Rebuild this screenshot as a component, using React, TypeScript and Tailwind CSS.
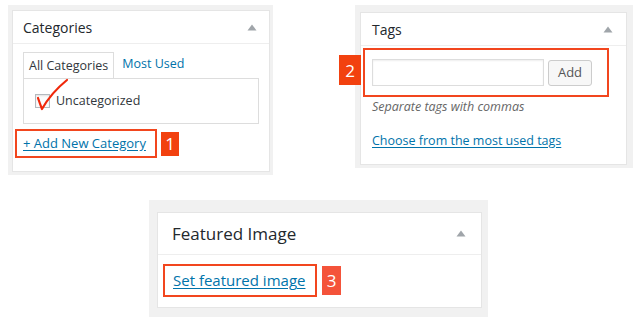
const font = { fontFamily: '"Open Sans", "Noto Sans", sans-serif' }

function Caret() {
  return (
    <svg width="10" height="7" viewBox="0 0 10 7" className="shrink-0">
      <path d="M5 0.5 L9.5 6.5 L0.5 6.5 Z" fill="#a0a5aa" />
    </svg>
  )
}

function Badge({ n, className }: { n: string; className: string }) {
  return (
    <div
      className={
        'flex items-center justify-center text-white text-[17px] leading-none ' + className
      }
    >
      {n}
    </div>
  )
}

function CategoriesBox() {
  return (
    <div className="ml-[8px] w-[265px] h-[170px] bg-[#f1f1f1] pl-[4px] pr-[3px] pt-[5px] pb-[3px]">
      <div className="h-full bg-white border border-[#e5e5e5] flex flex-col">
        <div className="h-[33px] flex items-center justify-between pl-[10px] pr-[12px] border-b border-[#eeeeee]">
          <span className="text-[14px] text-[#23282d]">Categories</span>
          <Caret />
        </div>
        <div className="pl-[10px] pr-[10px] pt-[7px]">
          <div className="flex items-end">
            <div className="h-[27px] px-[5px] flex items-center border border-b-0 border-[#dddddd] bg-white relative top-[1px] text-[12.5px] text-[#32373c]">
              All Categories
            </div>
            <div className="h-[27px] px-[8px] flex items-center text-[12.5px] text-[#0073aa]">
              Most Used
            </div>
          </div>
          <div className="h-[46px] border border-[#dddddd] flex items-center pl-[11px] relative">
            <div className="w-[15px] h-[14px] border border-[#b4b9be] bg-[#fbfbfb] shadow-[inset_0_1px_2px_rgba(0,0,0,0.1)]" />
            <span className="ml-[6px] text-[12.5px] text-[#32373c]">Uncategorized</span>
            <svg
              width="40"
              height="48"
              viewBox="0 0 40 48"
              className="absolute left-[10px] top-[-12px]"
            >
              <path
                d="M4 31 Q6 37 8 42 Q17 26 33 13"
                fill="none"
                stroke="#f0280a"
                strokeWidth="2.2"
                strokeLinecap="round"
                strokeLinejoin="round"
              />
            </svg>
          </div>
        </div>
        <div className="flex items-center mt-[5px] pl-[2px]">
          <div className="w-[142px] h-[29px] border-2 border-[#f2461e] flex items-center pl-[6px]">
            <a className="text-[13px] text-[#0073aa] underline underline-offset-2">
              + Add New Category
            </a>
          </div>
          <Badge n="1" className="ml-[4px] w-[18px] h-[24px] bg-[#f2410f]" />
        </div>
      </div>
    </div>
  )
}

function TagsBox() {
  return (
    <div className="ml-[82px] w-[278px] h-[163px] bg-[#f1f1f1] pl-[5px] pr-[6px] pt-[7px] pb-[3px]">
      <div className="h-full bg-white border border-[#e5e5e5] flex flex-col">
        <div className="h-[33px] flex items-center justify-between pl-[11px] pr-[13px] border-b border-[#eeeeee]">
          <span className="text-[14px] text-[#23282d]">Tags</span>
          <Caret />
        </div>
        <div className="flex items-start mt-[2px] -ml-[22px]">
          <Badge n="2" className="mt-[7px] w-[22px] h-[30px] bg-[#f2410f]" />
          <div className="ml-[2px] w-[246px] h-[49px] border-2 border-[#f2461e] flex items-center pl-[7px] gap-[4px]">
            <div className="w-[172px] h-[27px] border border-[#dddddd] bg-white shadow-[inset_0_1px_2px_rgba(0,0,0,0.07)]" />
            <div className="w-[44px] h-[26px] border border-[#cccccc] bg-[#f7f7f7] rounded-[3px] flex items-center justify-center text-[13px] text-[#555555]">
              Add
            </div>
          </div>
        </div>
        <div className="pl-[11px] mt-[1px] text-[12.5px] italic text-[#666666]">
          Separate tags with commas
        </div>
        <div className="pl-[11px] mt-[10px]">
          <a className="text-[12.5px] text-[#0073aa] underline underline-offset-2">
            Choose from the most used tags
          </a>
        </div>
      </div>
    </div>
  )
}

function FeaturedBox() {
  return (
    <div className="ml-[149px] w-[339px] h-[117px] bg-[#f1f1f1] pl-[8px] pr-[6px] pt-[12px] pb-[9px]">
      <div className="h-full bg-white border border-[#e5e5e5] flex flex-col">
        <div className="h-[42px] flex items-center justify-between pl-[14px] pr-[15px] border-b border-[#eeeeee]">
          <span className="text-[17px] text-[#23282d]">Featured Image</span>
          <Caret />
        </div>
        <div className="flex items-center mt-[9px] pl-[5px]">
          <div className="w-[154px] h-[33px] border-2 border-[#f2461e] flex items-center pl-[8px]">
            <a className="text-[15px] text-[#0073aa] underline underline-offset-2">
              Set featured image
            </a>
          </div>
          <Badge n="3" className="ml-[5px] w-[19px] h-[29px] bg-[#f4533a]" />
        </div>
      </div>
    </div>
  )
}

export default function App() {
  return (
    <div className="w-[640px] h-[320px] bg-white overflow-hidden" style={font}>
      <div className="flex pt-[5px]">
        <CategoriesBox />
        <TagsBox />
      </div>
      <div className="mt-[25px]">
        <FeaturedBox />
      </div>
    </div>
  )
}
